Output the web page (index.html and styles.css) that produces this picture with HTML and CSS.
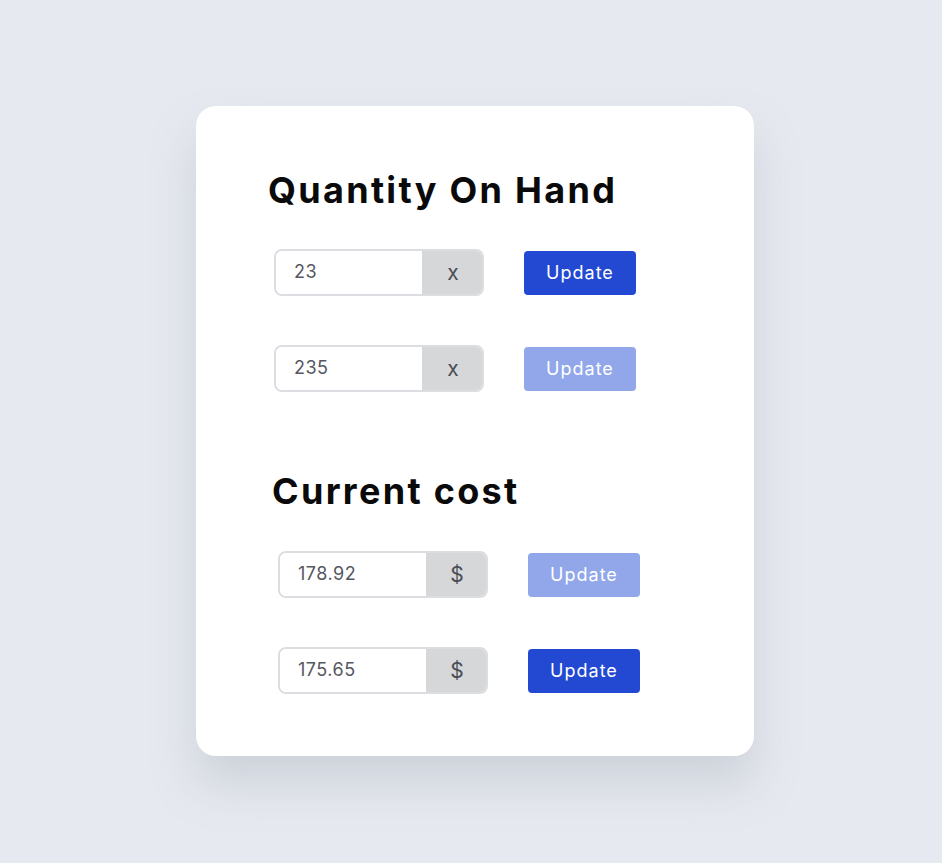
FILE: index.html
```html
<!DOCTYPE html>
<html lang="en">
<head>
    <meta charset="UTF-8">
    <meta name="viewport" content="width=device-width, initial-scale=1.0">
    <title>Inventory Update</title>
    <link rel="stylesheet" href="styles.css">
</head>
<body>
    <div class="card">
        <div class="section">
            <h2 class="title">Quantity On Hand</h2>
            <div class="row">
                <div class="field">
                    <input type="text" value="23">
                    <span class="addon">x</span>
                </div>
                <button class="update">Update</button>
            </div>
            <div class="row">
                <div class="field">
                    <input type="text" value="235">
                    <span class="addon">x</span>
                </div>
                <button class="update disabled">Update</button>
            </div>
        </div>
        <div class="section cost">
            <h2 class="title">Current cost</h2>
            <div class="row">
                <div class="field">
                    <input type="text" value="178.92">
                    <span class="addon">$</span>
                </div>
                <button class="update disabled">Update</button>
            </div>
            <div class="row">
                <div class="field">
                    <input type="text" value="175.65">
                    <span class="addon">$</span>
                </div>
                <button class="update">Update</button>
            </div>
        </div>
    </div>
</body>
</html>
```

FILE: styles.css
```css
body {
    font-family: Inter, "Noto Sans", sans-serif;
    margin: 0;
    padding: 106px 0 0 196px;
    background-color: #e6e9ef;
    min-height: 100vh;
    box-sizing: border-box;
}
.card {
    width: 558px;
    height: 650px;
    box-sizing: border-box;
    background: white;
    border-radius: 20px;
    box-shadow: 0 28px 44px rgba(160, 168, 180, 0.35);
    padding: 62px 0 0 78px;
}
.section {
    display: flex;
    flex-direction: column;
}
.cost {
    margin-top: 77px;
    padding-left: 4px;
}
.title {
    margin: 0 0 37px -6px;
    font-size: 36px;
    font-weight: 700;
    line-height: 44px;
    color: #0a0a0a;
    letter-spacing: 2.3px;
}
.cost .title {
    margin-bottom: 38px;
}
.row {
    display: flex;
    align-items: center;
    gap: 40px;
    margin-bottom: 49px;
}
.row:last-child {
    margin-bottom: 0;
}
.field {
    display: flex;
    width: 210px;
    height: 47px;
    box-sizing: border-box;
    border: 2px solid #dcdde1;
    border-radius: 8px;
    overflow: hidden;
}
.field input {
    flex: 1;
    min-width: 0;
    border: none;
    outline: none;
    padding: 0 0 3px 18px;
    font-family: inherit;
    font-size: 18px;
    letter-spacing: 0.5px;
    color: #555860;
    background: white;
}
.addon {
    width: 62px;
    display: flex;
    align-items: center;
    justify-content: center;
    background: #d6d7d9;
    color: #4a4d55;
    font-size: 21px;
    margin: -2px -2px -2px 0;
}
.update {
    width: 112px;
    height: 44px;
    border: none;
    border-radius: 4px;
    background-color: #2349d3;
    color: white;
    font-family: inherit;
    font-size: 18px;
    letter-spacing: 1px;
    cursor: pointer;
}
.update.disabled {
    background-color: #91a7e9;
}
```
